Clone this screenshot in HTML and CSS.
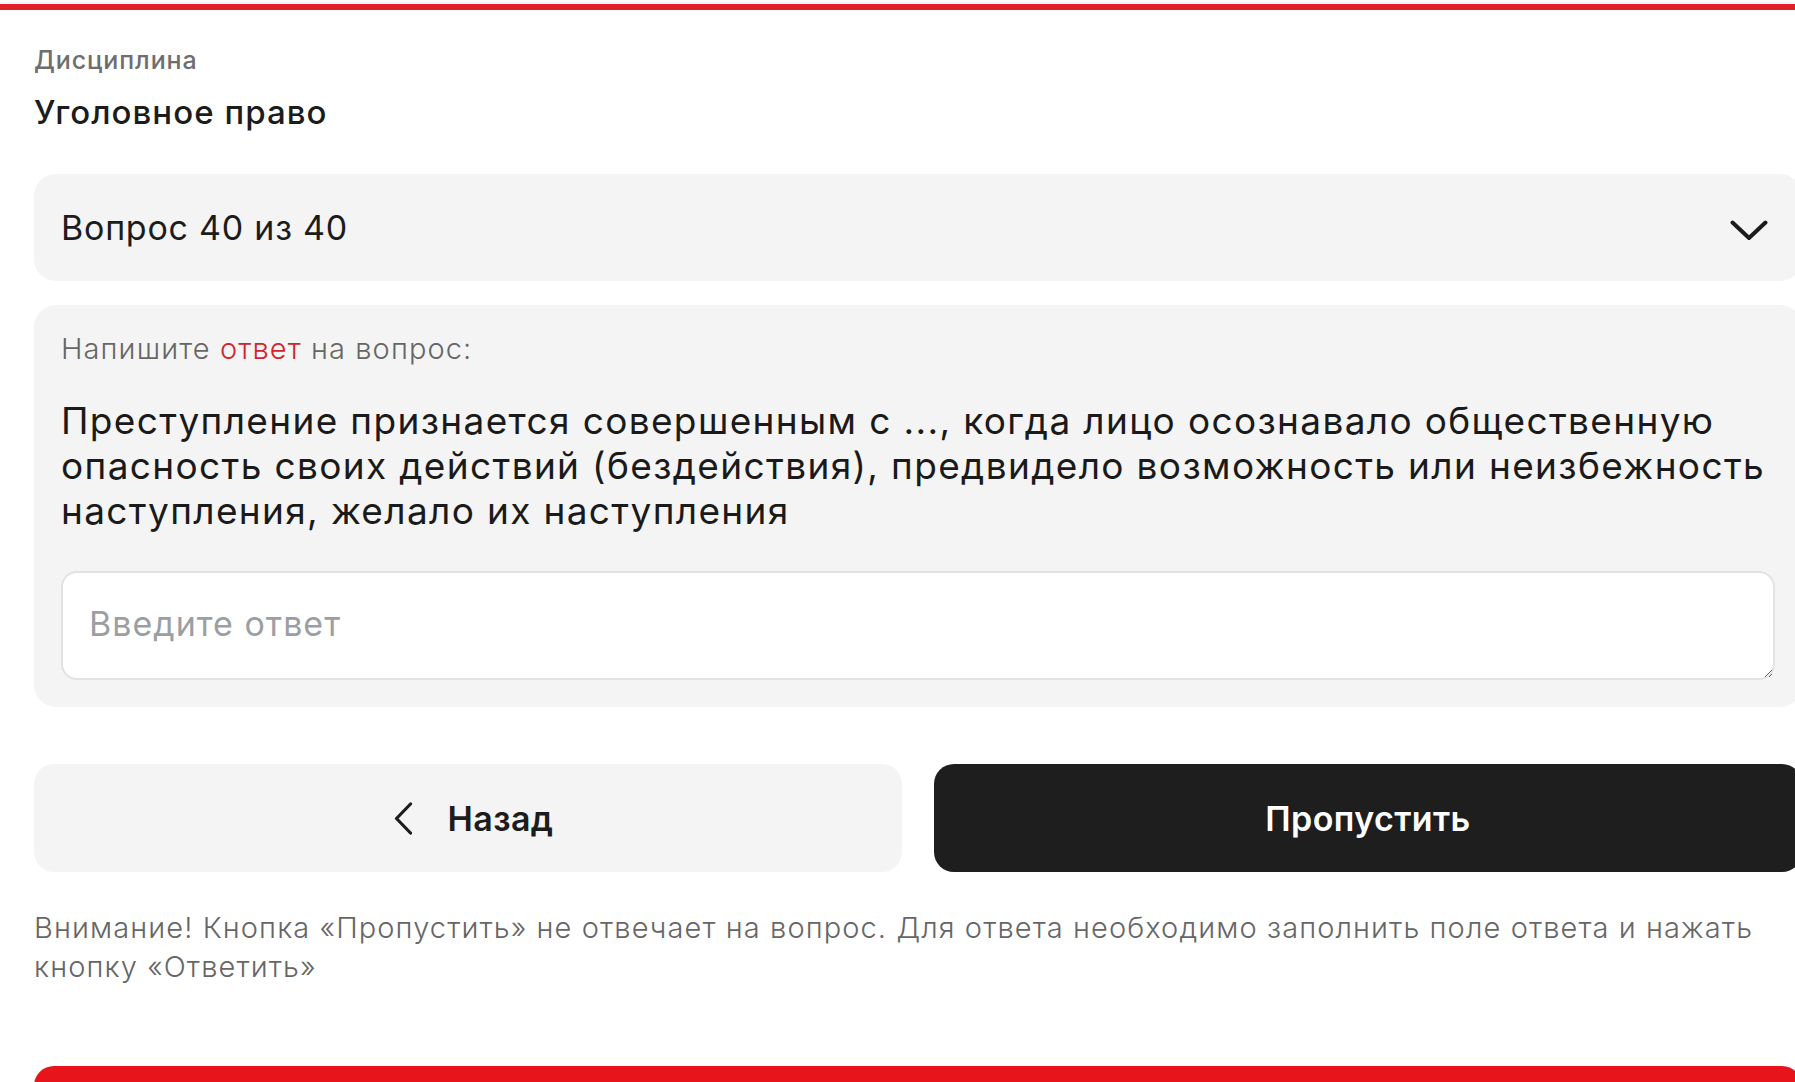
FILE: index.html
```html
<!DOCTYPE html>
<html lang="ru">
<head>
<meta charset="utf-8">
<title>Уголовное право — Вопрос 40 из 40</title>
<link rel="stylesheet" href="styles.css">
</head>
<body>
<div class="topbar"></div>
<main class="page">
  <div class="disc-label">Дисциплина</div>
  <div class="disc-name">Уголовное право</div>

  <div class="select">
    <span class="select-text">Вопрос 40 из 40</span>
    <svg class="select-chevron" width="38" height="21" viewBox="0 0 38 21"><polyline points="2.5,2.5 19,18 35.5,2.5" fill="none" stroke="#1c1c1c" stroke-width="4" stroke-linecap="round" stroke-linejoin="round"/></svg>
  </div>

  <section class="card">
    <div class="card-label">Напишите <span class="accent">ответ</span> на вопрос:</div>
    <div class="question">Преступление признается совершенным с ..., когда лицо осознавало общественную опасность своих действий (бездействия), предвидело возможность или неизбежность наступления, желало их наступления</div>
    <textarea class="answer" placeholder="Введите ответ"></textarea>
  </section>

  <div class="actions">
    <button class="btn btn-back">
      <svg class="back-icon" width="19" height="33" viewBox="0 0 19 33"><polyline points="16.5,2 2.5,16.5 16.5,31" fill="none" stroke="#1c1c1c" stroke-width="3.2" stroke-linecap="round" stroke-linejoin="round"/></svg>
      <span>Назад</span>
    </button>
    <button class="btn btn-skip">Пропустить</button>
  </div>

  <p class="notice">Внимание! Кнопка «Пропустить» не отвечает на вопрос. Для ответа необходимо заполнить поле ответа и нажать кнопку «Ответить»</p>

  <button class="btn btn-answer" aria-label="Ответить"></button>
</main>
</body>
</html>
```

FILE: styles.css
```css
html, body {
  margin: 0;
  padding: 0;
  background: #ffffff;
  overflow: hidden;
}

body {
  font-family: Inter, "Noto Sans", "Liberation Sans", sans-serif;
  color: #1c1c1c;
  height: 1082px;
}

.topbar {
  height: 6px;
  margin-top: 4px;
  background: #e0202a;
  box-shadow: 0 -3px 2px rgba(0, 0, 0, 0.04);
}

.page {
  width: 1768px;
  padding-left: 34px;
  box-sizing: content-box;
  display: flex;
  flex-direction: column;
}

.disc-label {
  margin-top: 35px;
  font-size: 25px;
  line-height: 30px;
  font-weight: 500;
  letter-spacing: 0.9px;
  color: #6e6e6e;
}

.disc-name {
  margin-top: 17px;
  font-size: 33px;
  line-height: 40px;
  font-weight: 500;
  letter-spacing: 1.05px;
  color: #1c1c1c;
}

.select {
  margin-top: 42px;
  height: 107px;
  box-sizing: border-box;
  background: #f4f4f4;
  border-radius: 22px;
  display: flex;
  align-items: center;
  justify-content: space-between;
  padding: 0 34px 0 27px;
}

.select-text {
  font-size: 34px;
  font-weight: 400;
  letter-spacing: 0.75px;
  color: #1c1c1c;
}

.select-chevron {
  display: block;
  margin-top: 6px;
}

.card {
  margin-top: 24px;
  background: #f4f4f4;
  border-radius: 22px;
  padding: 27px 27px 27px 27px;
  display: flex;
  flex-direction: column;
}

.card-label {
  font-size: 29px;
  line-height: 34px;
  font-weight: 300;
  letter-spacing: 1.1px;
  color: #666666;
}

.accent {
  color: #d1242b;
}

.question {
  margin-top: 32px;
  margin-right: -14px;
  font-size: 37px;
  line-height: 45px;
  font-weight: 400;
  letter-spacing: 1.35px;
  color: #1a1a1a;
}

.answer {
  margin-top: 38px;
  height: 109px;
  box-sizing: border-box;
  background: #ffffff;
  border: 2px solid #e2e2e2;
  border-radius: 16px;
  padding: 31px 26px;
  font-family: inherit;
  font-size: 34px;
  line-height: 40px;
  letter-spacing: 1px;
  color: #1c1c1c;
  outline: none;
  resize: vertical;
}

.answer::placeholder {
  color: #9b9fa4;
  font-weight: 400;
}

.actions {
  margin-top: 57px;
  display: grid;
  grid-template-columns: 1fr 1fr;
  gap: 32px;
}

.btn {
  height: 108px;
  border: none;
  border-radius: 20px;
  font-family: inherit;
  font-size: 34px;
  font-weight: 600;
  letter-spacing: 0.4px;
  display: flex;
  align-items: center;
  justify-content: center;
  cursor: pointer;
}

.btn-back {
  background: #f4f4f4;
  color: #1c1c1c;
  gap: 34px;
  padding-left: 18px;
}

.back-icon {
  display: block;
}

.btn-skip {
  background: #1e1e1e;
  color: #ffffff;
}

.notice {
  margin: 36px 0 0 0;
  font-size: 29px;
  line-height: 39px;
  font-weight: 300;
  letter-spacing: 1.1px;
  color: #666666;
}

.btn-answer {
  margin-top: 80px;
  background: #e8141c;
  flex-shrink: 0;
}
```
